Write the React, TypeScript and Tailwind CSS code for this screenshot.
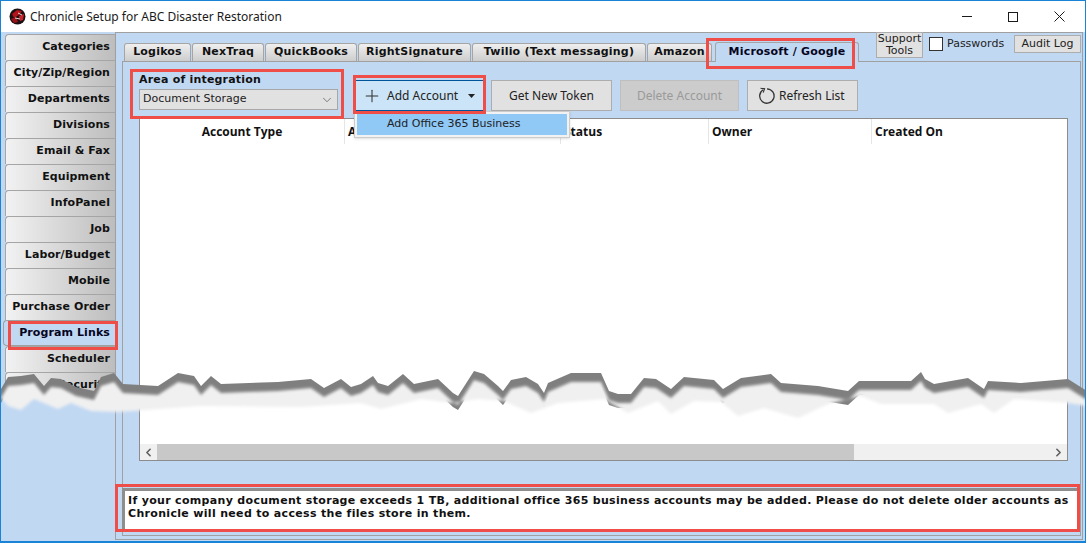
import { ChevronDown, ChevronLeft, ChevronRight, Plus } from "lucide-react";

const sideTabs = [
  "Categories",
  "City/Zip/Region",
  "Departments",
  "Divisions",
  "Email & Fax",
  "Equipment",
  "InfoPanel",
  "Job",
  "Labor/Budget",
  "Mobile",
  "Purchase Order",
  "Program Links",
  "Scheduler",
  "Security",
];

const topTabs = [
  { label: "Logikos", w: "w-[67px]" },
  { label: "NexTraq", w: "w-[72px]" },
  { label: "QuickBooks", w: "w-[92px]" },
  { label: "RightSignature", w: "w-[113px]" },
  { label: "Twilio (Text messaging)", w: "w-[174px]" },
  { label: "Amazon", w: "w-[65px]" },
];

// top edge of the torn paper strip, traced off the picture
const tear: [number, number][] = [
  [0, 388], [7, 376], [20, 375], [33, 373], [43, 385], [50, 377], [60, 378], [75, 386], [93, 390], [100, 376],
  [113, 372], [122, 383], [157, 385], [177, 372], [193, 375], [200, 385], [210, 375], [220, 383], [277, 381], [310, 378],
  [323, 387], [340, 378], [350, 386], [360, 383], [372, 375], [377, 382], [387, 385], [402, 373], [413, 383], [437, 378],
  [452, 392], [457, 395], [473, 370], [483, 373], [497, 385], [502, 390], [510, 379], [525, 376], [537, 383], [543, 392],
  [547, 382], [570, 372], [600, 372], [608, 390], [617, 393], [630, 393], [643, 377], [655, 378], [670, 388], [683, 376],
  [713, 379], [722, 388], [740, 377], [770, 373], [780, 382], [817, 385], [847, 390], [858, 380], [910, 380], [920, 371],
  [924, 378], [933, 383], [967, 377], [983, 388], [987, 380], [1020, 382], [1067, 378], [1086, 390],
];

const tearBottom: [number, number][] = [
  [1086, 405], [1067, 402], [1013, 398], [993, 412], [980, 403], [947, 412], [933, 403], [880, 403], [860, 395], [827, 403],
  [797, 417], [763, 407], [737, 415], [720, 401], [693, 400], [670, 413], [657, 400], [627, 412], [603, 398], [557, 402],
  [530, 412], [503, 400], [477, 398], [450, 402], [420, 398], [380, 408], [360, 402], [300, 406], [200, 405], [117, 411],
  [90, 410], [70, 402], [57, 408], [33, 398], [20, 409], [7, 405], [0, 397],
];

const toD = (pts: [number, number][]) => pts.map((p, i) => (i ? "L" : "M") + p[0] + " " + p[1]).join(" ");
const shifted = (dy: number) => tear.map((p): [number, number] => [p[0], p[1] + dy]);

function TornEdge() {
  const dark = toD(tear) + " " + toD([...shifted(14)].reverse()).replace("M", "L") + " Z";
  const light = toD(shifted(9)) + " " + toD(tearBottom).replace("M", "L") + " Z";
  return (
    <svg className="absolute left-0 top-0 pointer-events-none" width="1086" height="543">
      <defs>
        <filter id="soft" x="-2%" y="-20%" width="104%" height="140%">
          <feGaussianBlur stdDeviation="1.4" />
        </filter>
      </defs>
      <path d={dark} fill="#7f7f7f" />
      <path d={light} fill="#f0f0f0" filter="url(#soft)" />
    </svg>
  );
}

function RedBox({ className }: { className: string }) {
  return <div className={"absolute border-[3px] border-[#ef4d48] pointer-events-none " + className}></div>;
}

function Logo() {
  return (
    <svg width="17" height="17" viewBox="0 0 17 17" className="shrink-0">
      <circle cx="8.5" cy="8.5" r="8" fill="#1c1012" />
      <path d="M3 6 L8 2 L13 3 L10 7 L5 10 Z" fill="#b3131b" />
      <path d="M2 11 L7 9 L9 14 L5 15 Z" fill="#9c1018" />
      <path d="M10 8 L15 6 L14 12 L11 13 Z" fill="#c9232b" />
      <path d="M9 5 L13 7 M6 10 L11 11" stroke="#e8d8d8" strokeWidth="1" />
    </svg>
  );
}

function TitleBar() {
  return (
    <div className="h-[31px] bg-white flex items-center shrink-0">
      <div className="pl-2 pr-[4px] flex items-center">
        <Logo />
      </div>
      <span className="text-[12px] text-[#1a1a1a] font-['Noto_Sans',sans-serif]">
        Chronicle Setup for ABC Disaster Restoration
      </span>
      <div className="ml-auto flex items-center pr-[3px]">
        <div className="w-[46px] h-[30px] flex items-center justify-center">
          <div className="w-[10px] h-px bg-[#1a1a1a]"></div>
        </div>
        <div className="w-[46px] h-[30px] flex items-center justify-center">
          <div className="w-[10px] h-[10px] border border-[#1a1a1a]"></div>
        </div>
        <div className="w-[46px] h-[30px] flex items-center justify-center">
          <svg width="11" height="11" viewBox="0 0 11 11">
            <path d="M0.5 0.5 L10.5 10.5 M10.5 0.5 L0.5 10.5" stroke="#1a1a1a" strokeWidth="1" />
          </svg>
        </div>
      </div>
    </div>
  );
}

function SideBar() {
  return (
    <div className="w-[110px] shrink-0 ml-[4px] mt-[2px] flex flex-col font-['DejaVu_Sans',sans-serif] text-[11px] font-bold text-[#111] tracking-[0.1px]">
      {sideTabs.map((t) =>
        t === "Program Links" ? (
          <div
            key={t}
            className="h-[26px] shrink-0 -ml-[2px] flex items-center justify-end pr-[5px] border border-r-0 border-[#a0a0a0] rounded-l-[4px] bg-[#c1d8f3] text-[#05051e]"
          >
            {t}
          </div>
        ) : (
          <div
            key={t}
            className="h-[26px] shrink-0 flex items-center justify-end pr-[5px] whitespace-nowrap border border-r-0 border-b-0 border-[#a5a5a5] rounded-tl-[4px] bg-gradient-to-r from-[#f2f2f2] to-[#bdbdbd]"
          >
            {t}
          </div>
        )
      )}
    </div>
  );
}

function TopBar() {
  return (
    <div className="h-[28px] shrink-0 flex items-end pl-[8px] relative font-['DejaVu_Sans',sans-serif]">
      <div className="flex items-end text-[11px] font-bold text-[#111] tracking-[0.2px]">
        {topTabs.map((t) => (
          <div
            key={t.label}
            className={
              t.w +
              " h-[18px] mr-px flex items-center justify-center whitespace-nowrap border border-b-0 border-[#a5a5a5] rounded-t-[3px] bg-gradient-to-b from-[#efefef] to-[#cdcdcd]"
            }
          >
            {t.label}
          </div>
        ))}
        <div className="w-[144px] h-[20px] ml-[2px] -mb-px flex items-center justify-center whitespace-nowrap border border-b-0 border-[#a5a5a5] rounded-t-[3px] bg-[#c1d8f3] relative text-[#05051e]">
          Microsoft / Google
        </div>
      </div>
      <div className="ml-auto h-full flex items-start text-[11px] text-[#222]">
        <div className="w-[47px] h-[26px] -mt-px flex items-center justify-center text-center leading-[12px] bg-[#e1e1e1] border border-[#adadad]">
          Support Tools
        </div>
        <div className="w-[14px] h-[14px] ml-[6px] mt-[4px] bg-white border border-[#333]"></div>
        <span className="ml-[4px] mt-[3px] w-[67px]">Passwords</span>
        <div className="w-[67px] h-[18px] mt-[2px] mr-[1px] flex items-center justify-center bg-[#e1e1e1] border border-[#adadad]">
          Audit Log
        </div>
      </div>
    </div>
  );
}

function Toolbar() {
  return (
    <div className="flex h-[56px] shrink-0 pl-[16px] font-['DejaVu_Sans',sans-serif]">
      <div className="w-[199px] pt-[9px]">
        <div className="text-[11px] font-bold text-[#111] leading-[17px] tracking-[0.2px]">Area of integration</div>
        <div className="h-[21px] mt-px flex items-center justify-between pl-[3px] pr-[3px] bg-[#e1e1e1] border border-[#a8a8a8] text-[11px] text-[#222]">
          Document Storage
          <ChevronDown size={14} strokeWidth={1.25} color="#555" />
        </div>
      </div>
      <div className="flex items-start pt-[18px] text-[12px] text-[#222] font-['Noto_Sans',sans-serif]">
        <div className="w-[130px] h-[31px] ml-[16px] flex items-center pl-[7px] bg-[#cce4f7] border border-[#005499]">
          <Plus size={20} strokeWidth={1.25} color="#333" />
          <span className="ml-[5px]">Add Account</span>
          <svg width="7" height="4" viewBox="0 0 7 4" className="ml-[10px]">
            <path d="M0 0 H7 L3.5 4 Z" fill="#222" />
          </svg>
        </div>
        <div className="w-[121px] h-[31px] ml-[7px] flex items-center justify-center bg-[#e1e1e1] border border-[#adadad]">
          Get New Token
        </div>
        <div className="w-[119px] h-[31px] ml-[8px] flex items-center justify-center bg-[#cccccc] border border-[#bfbfbf] text-[#9a9a9a]">
          Delete Account
        </div>
        <div className="w-[111px] h-[31px] ml-[8px] flex items-center pl-[10px] bg-[#e1e1e1] border border-[#adadad]">
          <svg width="18" height="18" viewBox="0 0 18 18" className="shrink-0">
            <path d="M5.2 2.8 A7.2 7.2 0 1 0 9 1.8" fill="none" stroke="#333" strokeWidth="1.3" />
            <path d="M2.5 1.2 L6.6 1.8 L5.2 5.6" fill="none" stroke="#333" strokeWidth="1.1" />
          </svg>
          <span className="ml-[3px]">Refresh List</span>
        </div>
      </div>
    </div>
  );
}

function AccountTable() {
  return (
    <div className="h-[343px] ml-[16px] mr-[12px] shrink-0 bg-white border border-[#8c8c8c] flex flex-col">
      <div className="h-[25px] flex items-center font-['Open_Sans',sans-serif] font-bold text-[12px] text-[#111]">
        <div className="w-[204px] h-full flex items-center justify-center">Account Type</div>
        <div className="w-[216px] h-full flex items-center pl-[3px] border-l border-[#e5e5e5]">Account Name</div>
        <div className="w-[148px] h-full flex items-center pl-[3px] border-l border-[#e5e5e5]">Status</div>
        <div className="w-[163px] h-full flex items-center pl-[3px] border-l border-[#e5e5e5]">Owner</div>
        <div className="flex-1 h-full flex items-center pl-[3px] border-l border-[#e5e5e5]">Created On</div>
      </div>
      <div className="flex-1"></div>
      <div className="h-[16px] flex bg-[#f0f0f0]">
        <div className="w-[17px] flex items-center justify-center">
          <ChevronLeft size={13} strokeWidth={3} color="#606060" />
        </div>
        <div className="w-[697px] bg-[#c8c8c8]"></div>
        <div className="flex-1"></div>
        <div className="w-[17px] flex items-center justify-center">
          <ChevronRight size={13} strokeWidth={3} color="#606060" />
        </div>
      </div>
    </div>
  );
}

function NoteBox() {
  return (
    <div className="mt-[27px] h-[42px] -ml-[1px] mr-[1px] shrink-0 pl-[3px] pt-[3px] bg-white border-l-[3px] border-t-[3px] border-[#8e8e8e] font-['DejaVu_Sans',sans-serif] font-bold text-[11px] leading-[13px] tracking-[0.32px] text-[#111] border-b border-r border-b-[#e0e0e0] border-r-[#e0e0e0] whitespace-nowrap">
      If your company document storage exceeds 1 TB, additional office 365 business accounts may be added. Please do not delete older accounts as
      <br />
      Chronicle will need to access the files store in them.
    </div>
  );
}

export default function App() {
  return (
    <div className="w-[1086px] h-[543px] relative overflow-hidden flex flex-col bg-[#c1d8f3] border-x border-b-2 border-t border-[#1883d7]">
      <TitleBar />
      <div className="flex-1 min-h-0 flex">
        <SideBar />
        <div className="flex-1 flex flex-col mr-[2px] mb-[1px] border border-[#a0a0a0] min-w-0">
          <TopBar />
          <div className="flex-1 min-h-0 ml-[6px] mr-[1px] mb-[3px] flex flex-col border border-[#a0a0a0]">
            <Toolbar />
            <AccountTable />
            <NoteBox />
          </div>
        </div>
      </div>

      {/* the open Add Account menu */}
      <div className="absolute left-[353px] top-[110px] w-[216px] h-[27px] px-[2px] py-[2px] bg-[#f2f2f2] border border-[#cccccc] shadow-sm">
        <div className="h-full bg-[#90c8f6] flex items-center pl-[30px] text-[11px] text-[#222] font-['DejaVu_Sans',sans-serif]">
          Add Office 365 Business
        </div>
      </div>

      <TornEdge />

      <RedBox className="left-[129px] top-[68px] w-[214px] h-[50px]" />
      <RedBox className="left-[352px] top-[74px] w-[133px] h-[39px]" />
      <RedBox className="left-[705px] top-[37px] w-[149px] h-[31px]" />
      <RedBox className="left-[7px] top-[320px] w-[110px] h-[29px]" />
      <RedBox className="left-[114px] top-[483px] w-[965px] h-[48px]" />
    </div>
  );
}
